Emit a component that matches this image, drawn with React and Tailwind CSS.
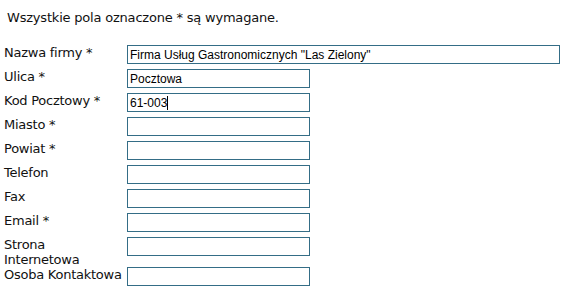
const fields = [
  { label: "Nazwa firmy *", value: 'Firma Usług Gastronomicznych "Las Zielony"', wide: true },
  { label: "Ulica *", value: "Pocztowa" },
  { label: "Kod Pocztowy *", value: "61-003", caret: true },
  { label: "Miasto *" },
  { label: "Powiat *" },
  { label: "Telefon" },
  { label: "Fax" },
  { label: "Email *" },
  { label: "Strona Internetowa", tall: true },
  { label: "Osoba Kontaktowa" },
];

const Field = ({ label, value, wide, caret, tall }) => (
  <div className={`flex ${tall ? "h-[30px]" : "h-[24px]"}`}>
    <div className="w-[126px] pl-[3px] text-[13px] leading-[15px] tracking-[-0.25px] text-[#111]">
      {tall ? (
        <>
          {label.split(" ")[0]}
          <br />
          {label.split(" ")[1]}
        </>
      ) : (
        label
      )}
    </div>
    <div
      className={`flex items-center h-[19px] border border-[#346d86] bg-white pl-[2px] text-[12px] text-black ${
        wide ? "w-[433px]" : "w-[183px]"
      }`}
      style={{ fontFamily: '"Liberation Sans", Arial, sans-serif' }}
    >
      {value}
      {caret && <span className="inline-block w-px h-[14px] bg-black" />}
    </div>
  </div>
);

export default function App() {
  return (
    <div
      className="w-[568px] h-[289px] bg-white overflow-hidden pl-[1px]"
      style={{ fontFamily: '"DejaVu Sans", Verdana, sans-serif' }}
    >
      <p className="pt-[10px] pl-[6px] text-[13px] leading-[15px] tracking-[-0.2px] text-[#111]">
        Wszystkie pola oznaczone * są wymagane.
      </p>
      <form className="mt-[20px]">
        {fields.map((f) => (
          <Field key={f.label} {...f} />
        ))}
      </form>
    </div>
  );
}
